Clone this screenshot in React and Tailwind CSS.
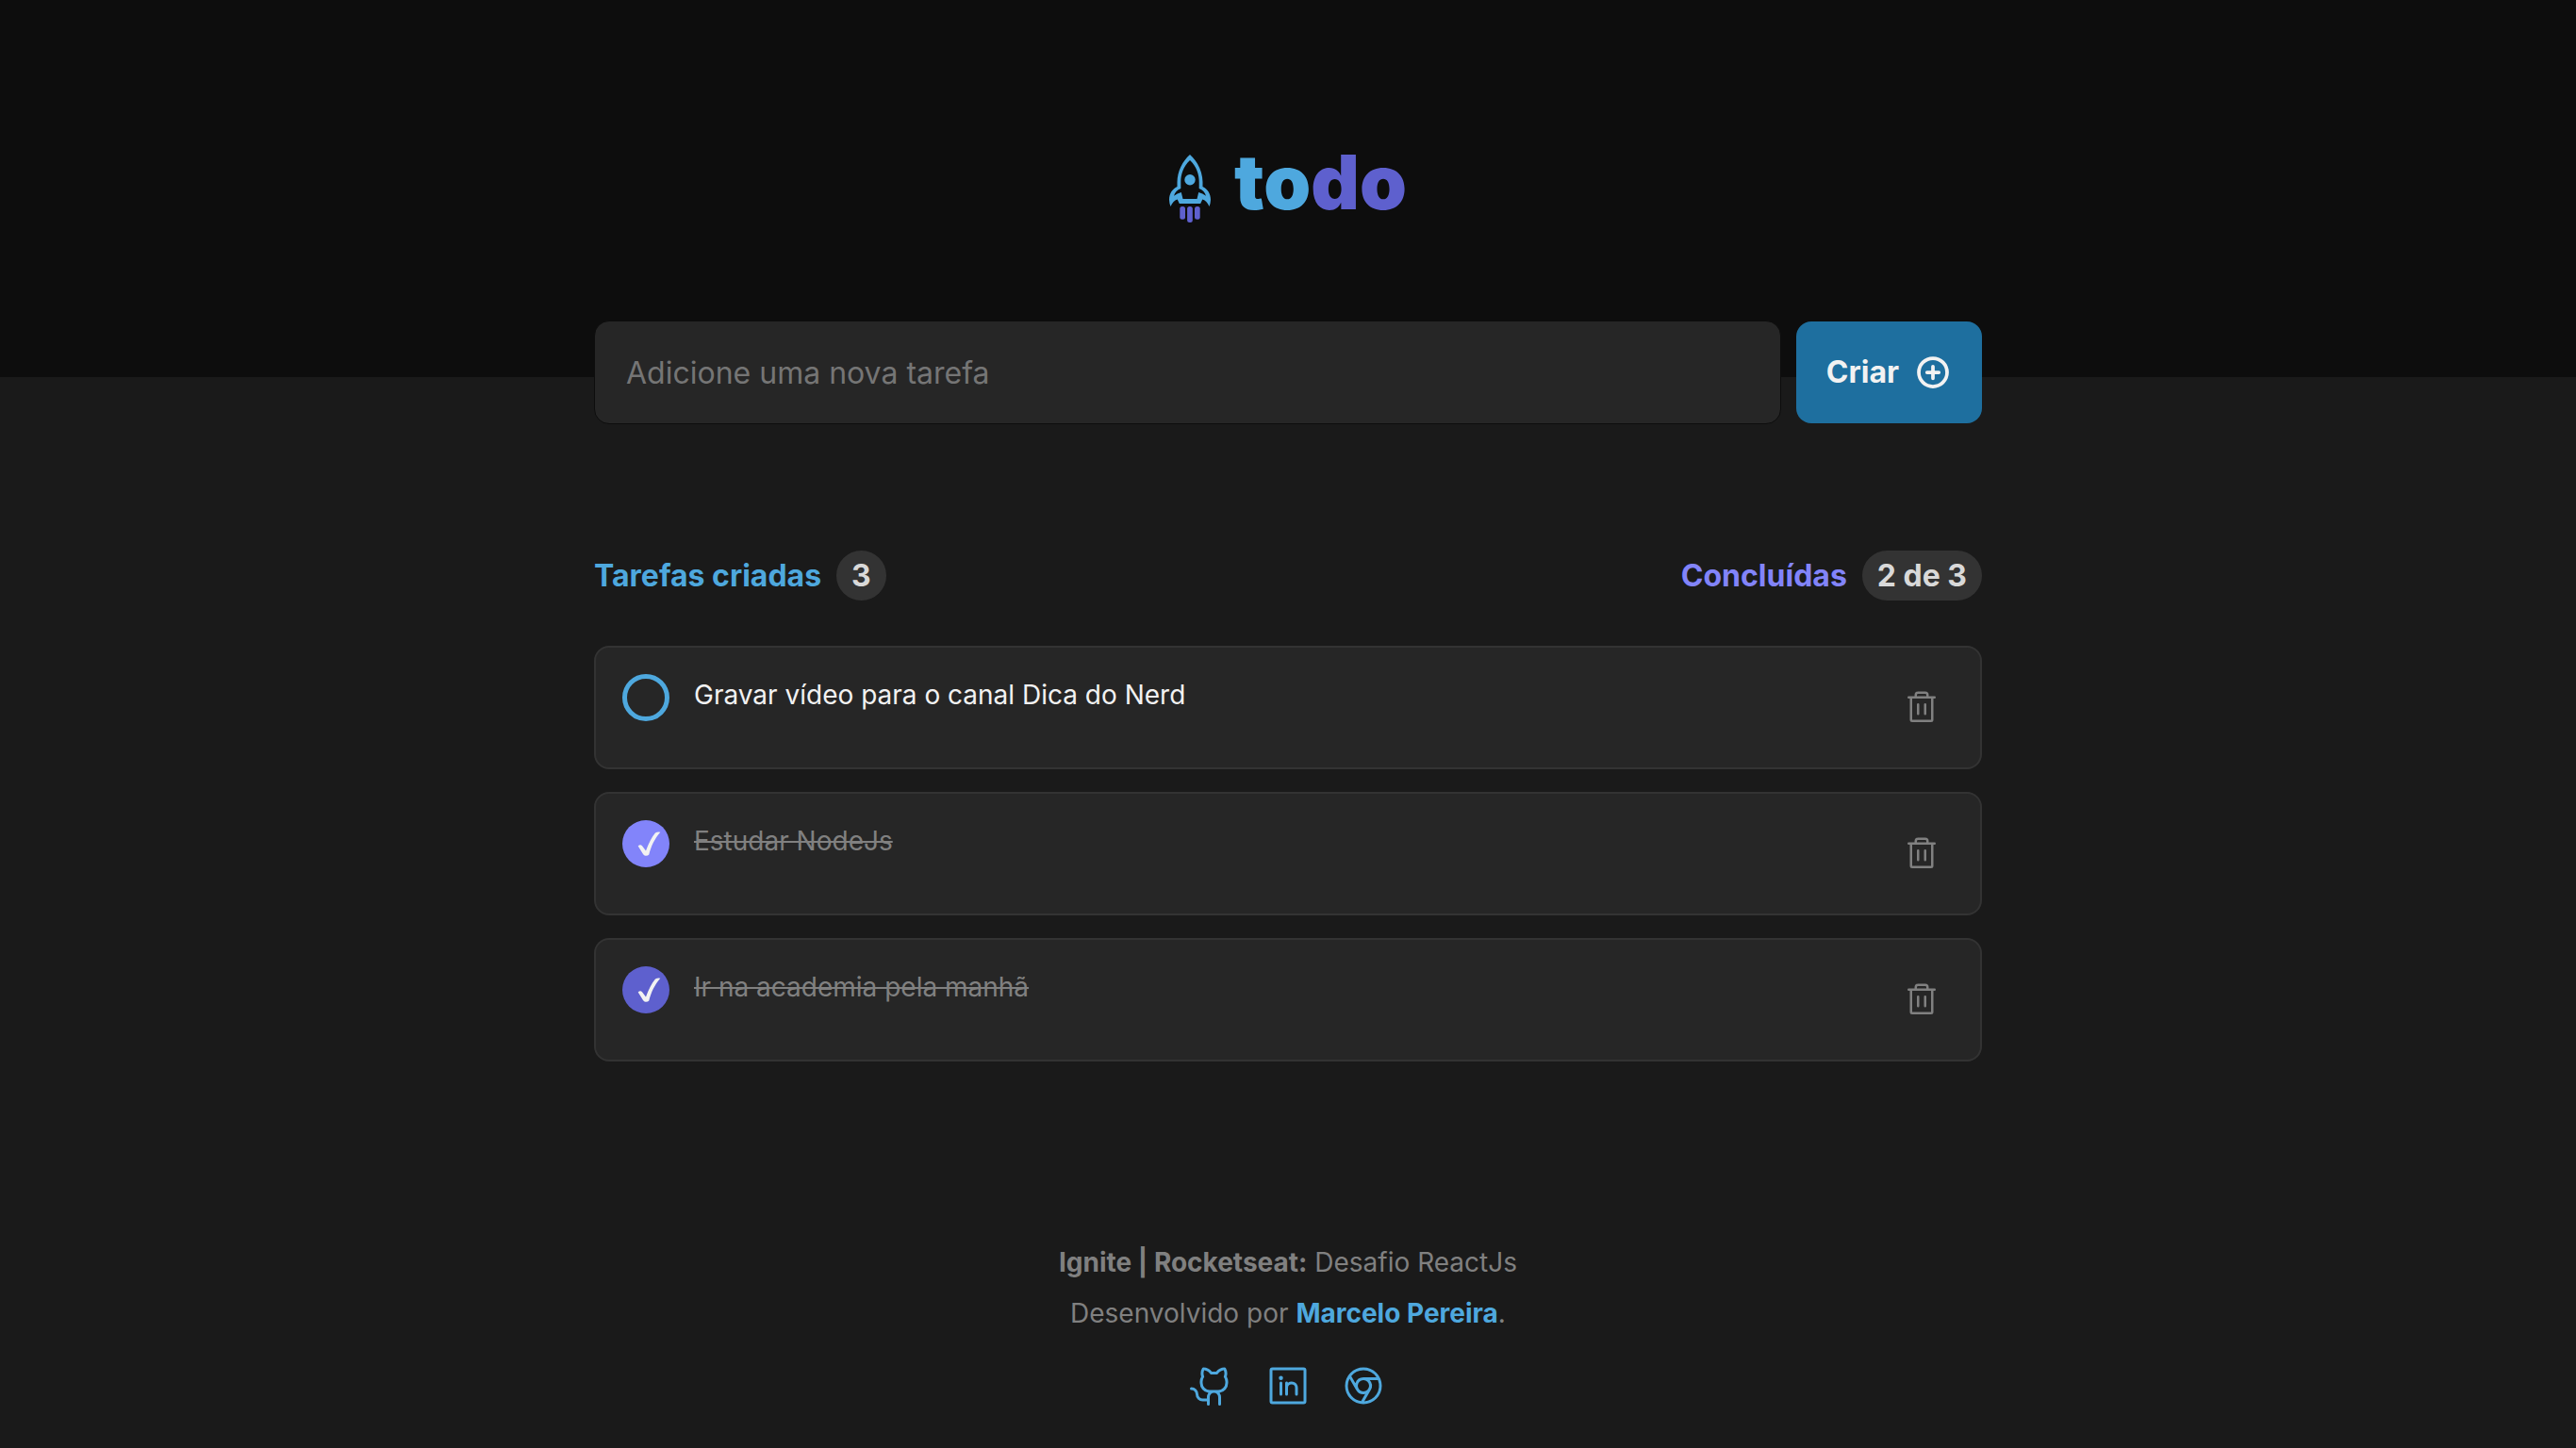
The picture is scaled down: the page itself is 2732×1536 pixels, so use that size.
import { PiPlusCircleBold, PiGithubLogo, PiLinkedinLogo, PiGoogleChromeLogo, PiTrash } from 'react-icons/pi';

const tasks = [
  { id: 'video', text: 'Gravar vídeo para o canal Dica do Nerd', done: false, tone: '' },
  { id: 'node', text: 'Estudar NodeJs', done: true, tone: 'bg-[#8284fa]' },
  { id: 'gym', text: 'Ir na academia pela manhã', done: true, tone: 'bg-[#5e60ce]' },
];

const links = [
  { label: 'GitHub', Icon: PiGithubLogo },
  { label: 'LinkedIn', Icon: PiLinkedinLogo },
  { label: 'Site', Icon: PiGoogleChromeLogo },
];

function Rocket() {
  return (
    <svg className="h-[72px] w-11" viewBox="0 0 44 72" aria-hidden="true">
      <path
        fill="#4ea8de"
        fillRule="evenodd"
        d="M22 0C14 7 8.700 18 8.500 29V34C3.500 36.500 0 41 0 48Q.2 52 1.500 55C3 51.500 5.500 48.500 8.700 47.500L10.800 52H33.200L35.300 47.500C38.500 48.500 41 51.500 42.500 55Q43.800 52 44 48C44 41 40.500 36.500 35.500 34V29C35.300 18 30 7 22 0ZM22 6C15 12.500 12.300 21 12.300 29V36C8.500 37.500 6 40 5 43.700Q8.500 41 12.800 40L14.500 47H29.500L31.200 40Q35.500 41 39 43.700C38 40 35.500 37.500 31.700 36V29C31.700 21 29 12.500 22 6Z"
      />
      <circle cx="22" cy="26.700" r="5.700" fill="#4ea8de" />
      <rect x="11.300" y="55" width="5.700" height="13.700" rx="2.500" fill="#5e60ce" />
      <rect x="19.100" y="55" width="5.700" height="17" rx="2.500" fill="#5e60ce" />
      <rect x="27" y="55" width="5.700" height="13.700" rx="2.500" fill="#5e60ce" />
    </svg>
  );
}

function Counter({ label, value, color }) {
  return (
    <div className="flex items-center gap-4">
      <span className={color}>{label}</span>
      <span className="rounded-full bg-[#333333] px-4 py-1.5 leading-[41px] text-[#d9d9d9]">{value}</span>
    </div>
  );
}

function Task({ id, text, done, tone }) {
  return (
    <li className="flex items-start rounded-2xl border-2 border-[#333333] bg-[#262626] px-7 pt-7 pb-[31px]">
      <span className="relative mr-[26px] size-[50px] shrink-0">
        <input
          id={id}
          type="checkbox"
          defaultChecked={done}
          className={`block size-[50px] appearance-none rounded-full ${done ? tone : 'border-[5px] border-[#4ea8de]'}`}
        />
        {done && (
          <svg className="pointer-events-none absolute inset-0 size-[50px]" viewBox="0 0 50 50" aria-hidden="true">
            <path
              fill="#f2f2f2"
              d="M16.700 27.500Q19 25.200 21 27.200L25 32.500C28 24.500 31 18 35 13.500Q37.500 12.200 40.300 12.800C34 20 30.500 28 28.300 36.500Q27 38 24.500 37.800Q23 37.500 22 36Z"
            />
          </svg>
        )}
      </span>
      <label
        htmlFor={id}
        className={`flex-1 text-[28px] leading-[44px] ${done ? 'text-[#808080] line-through' : 'text-[#f2f2f2]'}`}
      >
        {text}
      </label>
      <button type="button" aria-label="Excluir tarefa" className="mt-1 mr-0.5 grid size-16 place-items-center text-[#808080]">
        <PiTrash className="size-10" />
      </button>
    </li>
  );
}

export default function App() {
  return (
    <div className="min-h-screen bg-[#1a1a1a] font-['Inter',sans-serif] text-[#808080]">
      <header className="flex h-[400px] items-center justify-center gap-[25px] bg-[#0d0d0d]">
        <Rocket />
        <h1 className="pb-3.5 text-[80px] leading-none font-black text-[#4ea8de]">
          to<span className="text-[#5e60ce]">do</span>
        </h1>
      </header>

      <main className="mx-auto -mt-[60px] max-w-[1472px]">
        <form className="flex items-center gap-4">
          <input
            type="text"
            aria-label="Nova tarefa"
            placeholder="Adicione uma nova tarefa"
            className="h-[110px] min-w-0 flex-1 rounded-2xl border border-[#0d0d0d] bg-[#262626] px-[33px] text-[32px] text-[#f2f2f2] placeholder:text-[#757575]"
          />
          <button
            type="button"
            className="flex h-[108px] items-center gap-4 rounded-2xl bg-[#1e6f9f] px-8 text-[32px] font-bold text-[#f2f2f2]"
          >
            Criar
            <PiPlusCircleBold className="size-10" />
          </button>
        </form>

        <section className="mt-[134px]">
          <div className="flex justify-between text-[32px] font-bold">
            <Counter label="Tarefas criadas" value="3" color="text-[#4ea8de]" />
            <Counter label="Concluídas" value="2 de 3" color="text-[#8284fa]" />
          </div>
          <ul className="mt-12 flex flex-col gap-6">
            {tasks.map((task) => (
              <Task key={task.id} {...task} />
            ))}
          </ul>
        </section>
      </main>

      <footer className="mt-[186px] flex flex-col items-center pb-10 text-[28px] leading-[54px]">
        <p>
          <strong>Ignite | Rocketseat:</strong> Desafio ReactJs
        </p>
        <p>
          Desenvolvido por <a href="#autor" className="font-bold text-[#4ea8de]">Marcelo Pereira</a>.
        </p>
        <nav className="mt-[26px] flex gap-8">
          {links.map(({ label, Icon }) => (
            <a key={label} href={`#${label}`} aria-label={label} className="text-[#4ea8de]">
              <Icon className="size-12" />
            </a>
          ))}
        </nav>
      </footer>
    </div>
  );
}
